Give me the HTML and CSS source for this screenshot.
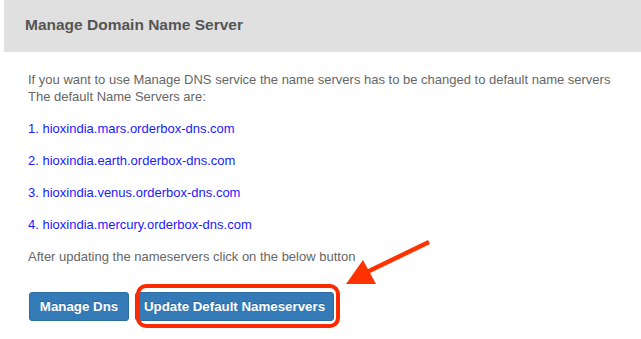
FILE: index.html
```html
<!DOCTYPE html>
<html>
<head>
<meta charset="utf-8">
<link rel="stylesheet" href="styles.css">
</head>
<body>
<div class="panel">
  <div class="panel-head">Manage Domain Name Server</div>
  <div class="panel-body">
    <p class="intro">If you want to use Manage DNS service the name servers has to be changed to default name servers<br>The default Name Servers are:</p>
    <p class="ns">1. hioxindia.mars.orderbox-dns.com</p>
    <p class="ns">2. hioxindia.earth.orderbox-dns.com</p>
    <p class="ns">3. hioxindia.venus.orderbox-dns.com</p>
    <p class="ns">4. hioxindia.mercury.orderbox-dns.com</p>
    <p class="note">After updating the nameservers click on the below button</p>
    <div class="actions">
      <button class="btn btn-manage">Manage Dns</button>
      <button class="btn btn-update">Update Default Nameservers</button>
      <span class="highlight"></span>
      <svg class="arrow" width="100" height="60" viewBox="0 0 100 60">
        <line x1="90" y1="6" x2="28" y2="36" stroke="#ff3300" stroke-width="4.5"/>
        <polygon points="7,48 37,48 24,24" fill="#ff3300"/>
      </svg>
    </div>
  </div>
</div>
</body>
</html>
```
FILE: styles.css
```css
html, body {
  margin: 0;
  padding: 0;
  background: #fff;
}
body {
  font-family: "Liberation Sans", Arial, sans-serif;
  font-size: 13px;
  color: #666;
}
.panel-head {
  margin-left: 4px;
  height: 52px;
  background: #dfe0df;
  padding-left: 21px;
  box-sizing: border-box;
  line-height: 50px;
  font-size: 15.5px;
  font-weight: bold;
  color: #555;
}
.panel-body {
  padding: 19px 0 19px 28px;
}
p {
  margin: 0;
  line-height: 17px;
}
.intro {
  margin-bottom: 15px;
}
.ns {
  color: #1a1aff;
  margin-bottom: 15px;
}
.actions {
  position: relative;
  display: flex;
  align-items: center;
  margin-top: 27px;
  gap: 6px;
}
.btn {
  font-family: "Liberation Sans", Arial, sans-serif;
  font-size: 13.3px;
  font-weight: bold;
  color: #fff;
  background: #337ab7;
  border: 1px solid #2e6da4;
  border-radius: 3px;
  height: 29px;
  padding: 0;
  margin: 0;
  white-space: nowrap;
  text-align: center;
  box-sizing: border-box;
  text-shadow: 0 -1px 0 rgba(0,0,0,0.2);
}
.btn-manage {
  margin-left: 1px;
  width: 100px;
}
.btn-update {
  width: 199px;
}
.highlight {
  position: absolute;
  left: 108px;
  top: -8px;
  width: 204px;
  height: 44px;
  box-sizing: border-box;
  border: 4px solid #ff2a00;
  border-radius: 10px;
}
.arrow {
  position: absolute;
  left: 311px;
  top: -56px;
}
```
